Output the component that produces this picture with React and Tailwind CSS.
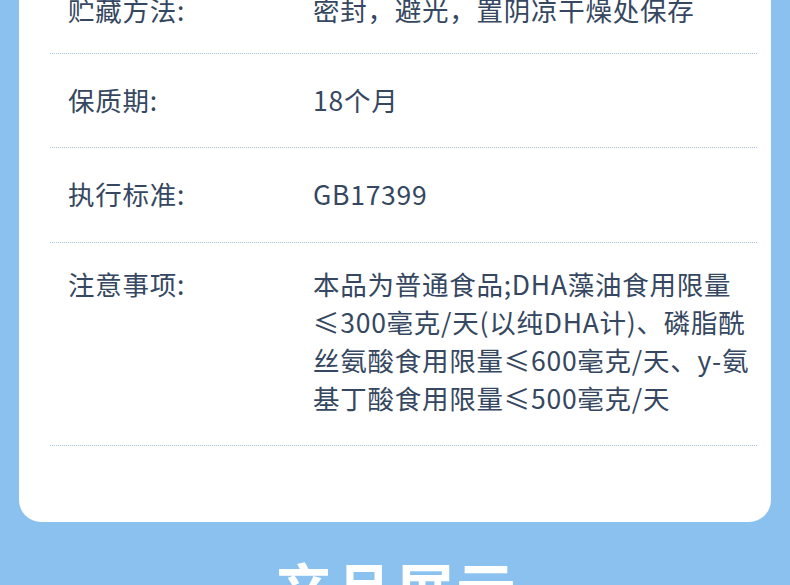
import React from 'react';

const rows = [
  { label: '贮藏方法:', lines: ['密封，避光，置阴凉干燥处保存'], pad: 'pt-0 pb-[24px]' },
  { label: '保质期:', lines: ['18个月'], pad: 'pt-[27px] pb-[28px]' },
  { label: '执行标准:', lines: ['GB17399'], pad: 'pt-[27px] pb-[29px]' },
  {
    label: '注意事项:',
    lines: [
      '本品为普通食品;DHA藻油食用限量',
      '≤300毫克/天(以纯DHA计)、磷脂酰',
      '丝氨酸食用限量≤600毫克/天、y-氨',
      '基丁酸食用限量≤500毫克/天',
    ],
    pad: 'pt-[22px] pb-[28px]',
  },
];

function InfoRow({ label, lines, pad, first }) {
  return (
    <div className={first ? '' : 'border-t border-dotted border-[#a9c2dc]'}>
      <div className={`flex pl-[18px] ${pad}`}>
        <div className="w-[245px] shrink-0 leading-[38px]">{label}</div>
        <div className="leading-[38px]">
          {lines.map((line) => (
            <div key={line} className="whitespace-nowrap">{line}</div>
          ))}
        </div>
      </div>
    </div>
  );
}

export default function App() {
  return (
    <div className="w-[790px] h-[585px] overflow-hidden bg-[#8bc1ee] font-['Noto_Sans_CJK_SC','Noto_Sans',sans-serif]">
      <div className="mx-[19px] -mt-[9px] bg-white rounded-b-[22px] pb-[76px]">
        <div className="ml-[31px] mr-[14px] text-[26.5px] tracking-[0.75px] text-[#354761] border-b border-dotted border-[#a9c2dc]">
          {rows.map((row, i) => (
            <InfoRow key={row.label} {...row} first={i === 0} />
          ))}
        </div>
      </div>
      <div className="mt-[36px] text-center text-white text-[60px] font-bold leading-none tracking-[1px]">
        产品展示
      </div>
    </div>
  );
}
